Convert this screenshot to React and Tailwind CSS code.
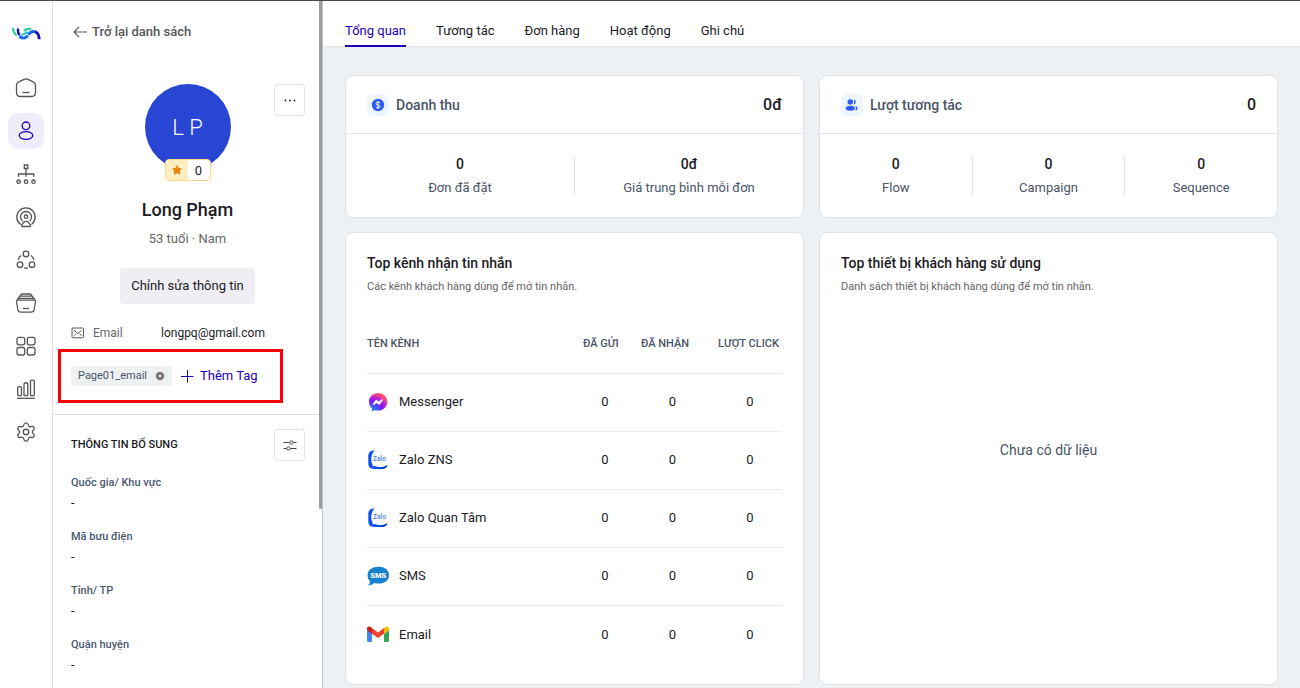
import React from 'react';
import { Settings } from 'lucide-react';

function Logo() {
  return (
    <svg viewBox="0 0 30 16" className="h-4 w-[30px]" fill="none" strokeWidth="2.2">
      <path d="M2 1.800C2 4.800 3 7.400 5.600 9.300" stroke="#2bcf9f" />
      <path d="M6.900 2.500c-.2 2.600.2 4.900 1.700 6.800" stroke="#1d0ab5" strokeWidth="2.400" />
      <path d="M8.300 10.300c2.400 2.600 6 2.700 8.600-.6" stroke="#1767f5" strokeWidth="2.800" />
      <path d="M10.300 8.800c2.200.2 4-1.300 6.200-2.900" stroke="#1cc9c4" />
      <path d="M13 5c2-2 4.300-2.500 7-1.800" stroke="#2bcf9f" strokeWidth="2.400" />
      <path d="M17.300 8.800c1.600-2.700 3.900-4 7.200-3" stroke="#1767f5" strokeWidth="2.800" />
      <path d="M24 5.600c2.500.8 4 3.200 4.200 7.600" stroke="#1d0ab5" strokeWidth="2.800" />
    </svg>
  );
}

const navItems = [
  {
    label: 'Trang chủ',
    icon: (
      <>
        <path d="M16 9.300q2-1 4 0l5.600 2.900q1.900 1 1.900 3v7.300q0 4-4 4h-11q-4 0-4-4v-7.300q0-2 1.900-3z" />
        <path d="M14.500 22.500h7" />
      </>
    ),
  },
  {
    label: 'Khách hàng',
    active: true,
    icon: (
      <>
        <circle cx="18" cy="12.800" r="3.800" />
        <ellipse cx="18" cy="22.500" rx="6.800" ry="3.900" />
      </>
    ),
  },
  {
    label: 'Tổ chức',
    icon: (
      <>
        <path d="M16.300 9h3.500v3.500h-3.500zM18 12.500v8.300M10.500 20.800v-2.800h15.200v2.800" />
        <circle cx="10.600" cy="25.700" r="1.700" />
        <circle cx="18" cy="25.700" r="1.700" />
        <circle cx="25.500" cy="25.700" r="1.700" />
      </>
    ),
  },
  {
    label: 'Chiến dịch',
    icon: (
      <>
        <path d="M12.500 25.400a9.200 9.200 0 1 1 11 0" />
        <path d="M14.200 22a5.500 5.500 0 1 1 7.600 0" />
        <circle cx="18" cy="17.700" r="1.700" />
        <path d="M15.600 23.300q2.400-2 4.800 0l2 2.700q.3 1.500-1 1.500h-6.800q-1.300 0-1-1.500z" />
      </>
    ),
  },
  {
    label: 'Kết nối',
    icon: (
      <>
        <circle cx="18" cy="12" r="2.800" />
        <circle cx="12" cy="22.700" r="2.800" />
        <circle cx="24" cy="22.700" r="2.800" />
        <path d="M13 13.500q-2.300 1.600-2.800 4.300M23 13.500q2.300 1.600 2.800 4.300M16 25.800q2 .5 4 0" />
      </>
    ),
  },
  {
    label: 'Sản phẩm',
    icon: (
      <>
        <path d="M13.500 9h9M11.500 11.200h13M10.500 13.300h15M13.500 9l-4.500 6M22.500 9l4.500 6" />
        <path d="M9.300 15.200h17.400q1 .2.800 1.300l-1.300 8q-.5 2.700-3.200 2.700h-10q-2.700 0-3.200-2.700l-1.300-8q-.2-1.100.8-1.300z" />
        <path d="M15 23.500h6" />
      </>
    ),
  },
  {
    label: 'Ứng dụng',
    icon: (
      <>
        <rect x="9" y="9.300" width="7.700" height="7.500" rx="2" />
        <rect x="19.300" y="9.300" width="7.700" height="7.500" rx="2" />
        <rect x="9" y="19.500" width="7.700" height="7.500" rx="2" />
        <rect x="19.300" y="19.500" width="7.700" height="7.500" rx="2" />
      </>
    ),
  },
  {
    label: 'Báo cáo',
    icon: (
      <>
        <rect x="9.700" y="15.700" width="3.800" height="9" rx="1" />
        <rect x="16" y="12" width="3.800" height="12.700" rx="1" />
        <rect x="22.500" y="9.200" width="3.800" height="15.500" rx="1" />
        <path d="M9 27.300h18" />
      </>
    ),
  },
  { label: 'Cài đặt', icon: <Settings x="7" y="7" width="22" height="22" strokeWidth={1.4} /> },
];

function NavRail() {
  return (
    <nav className="flex w-[53px] shrink-0 flex-col items-center border-r border-[#dfe1e6] bg-white pt-[25px]">
      <a href="#home" aria-label="Logo">
        <Logo />
      </a>
      <ul className="mt-7 flex flex-col gap-[7px]">
        {navItems.map((item) => (
          <li key={item.label}>
            <a
              href="#nav"
              aria-label={item.label}
              className={
                item.active
                  ? 'block size-9 rounded-[10px] bg-[#efedfb] text-[#1d00b4]'
                  : 'block size-9 rounded-[10px] text-[#555]'
              }
            >
              <svg viewBox="0 0 36 36" className="size-9" fill="none" stroke="currentColor" strokeWidth="1.300">
                {item.icon}
              </svg>
            </a>
          </li>
        ))}
      </ul>
    </nav>
  );
}

function Profile() {
  return (
    <section className="relative flex flex-col items-center px-[18px]">
      <button
        type="button"
        aria-label="Thêm thao tác"
        className="absolute right-[17px] top-0 flex h-8 w-[31px] items-center justify-center rounded border border-[#dfe1e6]"
      >
        <svg viewBox="0 0 12 4" className="h-1 w-3 fill-[#222]">
          <circle cx="1.500" cy="2.500" r="0.900" />
          <circle cx="6" cy="2.500" r="0.900" />
          <circle cx="10.500" cy="2.500" r="0.900" />
        </svg>
      </button>
      <div className="flex size-[86px] items-center justify-center rounded-full bg-[#2945d3] text-[22px] font-light text-white">
        L P
      </div>
      <div className="z-10 -mt-[11px] flex h-[22px] w-[46px] overflow-hidden rounded border border-[#fcd884] bg-white text-[13px] leading-[22px]">
        <span className="flex w-[22px] items-center justify-center bg-[#feeec2]">
          <svg viewBox="0 0 12 12" className="size-3 fill-[#e8830c] stroke-[#e8830c]" strokeLinejoin="round">
            <path d="m6 1.700 1.300 2.700 3 .4-2.200 2.100.6 3.200L6 8.700l-2.700 1.400.6-3.200-2.200-2.100 3-.4z" />
          </svg>
        </span>
        <span className="flex-1 text-center">0</span>
      </div>
      <h1 className="mt-[17px] text-lg leading-6 font-medium">Long Phạm</h1>
      <p className="mt-2 text-[13px] leading-[18px] text-[#666]">53 tuổi · Nam</p>
      <button type="button" className="mt-5 h-9 rounded bg-[#eeeef3] px-[11px] text-[13px]">
        Chỉnh sửa thông tin
      </button>
      <dl className="mt-5 flex w-full items-center text-xs leading-[18px]">
        <dt className="flex w-[90px] items-center text-[#666]">
          <svg viewBox="0 0 14 12" className="mr-2 h-3 w-[14px]" fill="none" stroke="#555">
            <rect x="1" y="1" width="11.500" height="9.800" rx="1" />
            <path d="m3 3.500 3.800 3 3.700-3M3 8.700l2-2M10.500 8.700l-2-2" />
          </svg>
          Email
        </dt>
        <dd>longpq@gmail.com</dd>
      </dl>
    </section>
  );
}

function Tags() {
  return (
    <div className="mt-[7px] mr-[39px] ml-[5px] flex h-[54px] items-center border-3 border-[#fb0007] pl-[10px]">
      <span className="flex h-5 items-center rounded-xs bg-[#eef1f2] px-[7px] text-[11px] text-[#4a5568]">
        Page01_email
        <button type="button" aria-label="Xóa tag" className="ml-2">
          <svg viewBox="0 0 10 10" className="size-[10px]">
            <circle cx="5" cy="5" r="4.200" fill="#777" />
            <path d="m3.800 3.800 2.400 2.400M6.200 3.800 3.800 6.200" stroke="#eee" strokeWidth="1.100" />
          </svg>
        </button>
      </span>
      <button type="button" className="ml-2 flex items-center text-[13px] text-[#1d00b4]">
        <svg viewBox="0 0 14 14" className="mr-1.5 size-[14px]" fill="none" stroke="currentColor">
          <path d="M7.500 1v12.500M1 7.500h12.500" />
        </svg>
        Thêm Tag
      </button>
    </div>
  );
}

const extraFields = ['Quốc gia/ Khu vực', 'Mã bưu điện', 'Tỉnh/ TP', 'Quận huyện'];

function CustomerPanel() {
  return (
    <aside className="relative w-[270px] shrink-0 overflow-hidden border-r border-[#bfc3ca] bg-white">
      <a href="#list" className="mt-[21px] mb-[42px] ml-5 flex items-center text-[13px] leading-5 font-medium text-[#555]">
        <svg viewBox="0 0 14 12" className="mr-[5px] h-3 w-[14px]" fill="none" stroke="currentColor" strokeWidth="1.200">
          <path d="M6 1 1 6l5 5M1 6h13" />
        </svg>
        Trở lại danh sách
      </a>
      <Profile />
      <Tags />
      <section className="mt-[11px] border-t border-[#dfe1e6] pl-[18px] pr-[17px] pt-[14px]">
        <div className="flex items-center justify-between">
          <h2 className="text-[11px] font-medium">THÔNG TIN BỔ SUNG</h2>
          <button
            type="button"
            aria-label="Tùy chỉnh"
            className="flex h-8 w-[31px] items-center justify-center rounded border border-[#dfe1e6] text-[#444]"
          >
            <svg viewBox="0 0 14 12" className="h-3 w-[14px]" fill="none" stroke="currentColor">
              <path d="M.5 3.500h6M10.500 3.500h3M.5 9.500h3M7.500 9.500h6" />
              <circle cx="8.500" cy="3.500" r="1.700" />
              <circle cx="5.500" cy="9.500" r="1.700" />
            </svg>
          </button>
        </div>
        <dl className="mt-[14px] text-[11px]">
          {extraFields.map((name) => (
            <div key={name} className="h-[54px]">
              <dt className="leading-4 font-medium text-[#4a5872]">{name}</dt>
              <dd className="mt-[3px] text-[13px] leading-[18px]">-</dd>
            </div>
          ))}
        </dl>
      </section>
      <div className="absolute right-0 top-0 h-[74%] w-[3px] rounded-b-sm bg-[#9c9d9f]" />
    </aside>
  );
}

const tabs = ['Tổng quan', 'Tương tác', 'Đơn hàng', 'Hoạt động', 'Ghi chú'];

function CoinIcon() {
  return (
    <svg viewBox="0 0 22 22" className="size-[22px]">
      <circle cx="11" cy="11" r="6.200" fill="#2f5bf3" />
      <path
        d="M13 9.100q-.4-1-2-1-1.900 0-1.900 1.400t1.900 1.500q2 .1 2 1.500T11 13.900q-1.700 0-2-1M11 7v8"
        fill="none"
        stroke="#fff"
        strokeWidth="0.900"
      />
    </svg>
  );
}

function PeopleIcon() {
  return (
    <svg viewBox="0 0 22 22" className="size-[22px] fill-[#2f5bf3]">
      <circle cx="9.300" cy="8" r="2.800" />
      <ellipse cx="9.300" cy="14.300" rx="4.500" ry="2.500" />
      <path d="M12.800 5.600q2 .3 2 2.400t-2 2.400q1-2.400 0-4.800zM14.500 12.100q2 .5 2 2.300t-2 2q.9-2 0-4.300z" />
    </svg>
  );
}

function StatCard({ icon, title, total, stats }) {
  return (
    <section className="rounded-lg border border-[#e0e2e7] bg-white">
      <header className="flex h-[58px] items-center border-b border-[#e0e2e7] px-[21px]">
        <span className="mr-[7px] rounded-md bg-[#edf5ff]">{icon}</span>
        <h2 className="text-sm font-medium text-[#4a5568]">{title}</h2>
        <span className="ml-auto text-base font-medium">{total}</span>
      </header>
      <dl className="flex py-[22px]">
        {stats.map(([label, value]) => (
          <div key={label} className="flex flex-1 flex-col-reverse border-l border-[#e0e2e7] text-center first:border-l-0">
            <dt className="mt-2 text-[13px] leading-[14px] text-[#4a5568]">{label}</dt>
            <dd className="text-sm leading-[17px] font-medium">{value}</dd>
          </div>
        ))}
      </dl>
    </section>
  );
}

function MessengerIcon() {
  return (
    <svg viewBox="0 0 22 22" className="size-[22px]">
      <defs>
        <radialGradient id="messenger" cx="0.190" cy="0.990" r="1.090">
          <stop offset="0" stopColor="#0099ff" />
          <stop offset="0.550" stopColor="#8a0fff" />
          <stop offset="0.850" stopColor="#f5408a" />
          <stop offset="1" stopColor="#ff6a5c" />
        </radialGradient>
      </defs>
      <path
        d="M11.200 2C5.900 2 2 5.800 2 10.800c0 2.700 1.100 5 2.900 6.500v3.200l2.900-1.500c1 .4 2.200.6 3.400.6 5.300 0 9.100-3.800 9.100-8.800S16.500 2 11.200 2z"
        fill="url(#messenger)"
      />
      <path d="m5.500 13.500 2.800-4.300q.7-.8 1.600-.2l2 1.500 2.700-2q1.300-.5 1.300.4l-2.700 4.300q-.7.8-1.600.2l-2-1.500-2.700 2z" fill="#fff" />
    </svg>
  );
}

function ZaloIcon() {
  return (
    <svg viewBox="0 0 22 22" className="size-[22px]">
      <path
        d="M7.500 1.500C3.200 1.500 1.300 3.500 1.300 7.500v6.300c0 4.400 1.900 6.200 6 6.200h7.200c3.200 0 5.100-1 5.900-3.700-3 1.800-8.400 2.500-12.900.7-.8.300-1.700.4-2.400.3.500-.6.700-1.300.5-1.900C3.500 12 3.700 5.500 7.500 1.500z"
        fill="#0b4ff5"
      />
      <path d="M8 19.900h6.500c3.200 0 5.100-1 5.900-3.600-2.800 2-7 3.200-12.400 3.600z" fill="#0a3bbd" />
      <text x="12.500" y="12.300" textAnchor="middle" fontSize="6.500" fontWeight="500" fill="#3f7dff" fontFamily="Roboto, sans-serif">
        Zalo
      </text>
    </svg>
  );
}

function SmsIcon() {
  return (
    <svg viewBox="0 0 22 22" className="size-[22px]">
      <path d="M11.500 1.800C17.500 1.800 22 4.800 22 10.200s-4.500 8.300-10.500 8.300c-1.500 0-3-.2-4.300-.6-1.500 1.500-3.700 2.400-6.700 2.500 2-1 2.700-2.400 2.400-4.300C1.200 14.700.6 12.700.6 10.200.6 4.800 5.500 1.800 11.500 1.800z" fill="#1681cf" />
      <text x="11.300" y="12.900" textAnchor="middle" fontSize="7.500" fontWeight="900" fill="#fff" fontFamily="Roboto, sans-serif">
        SMS
      </text>
    </svg>
  );
}

function GmailIcon() {
  return (
    <svg viewBox="0 0 22 22" className="size-[22px]">
      <path d="M0 7v10.500q0 1.500 1.500 1.500H5V10.500z" fill="#4285f4" />
      <path d="M22 7v10.500q0 1.500-1.500 1.500H17V10.500z" fill="#34a853" />
      <path d="M5 5v5.700l6 4.400 6-4.400V5l-6 4.500z" fill="#ea4335" />
      <path d="M0 5.500v1.700l5 3.700V5L3.800 4C2 2.800 0 3.500 0 5.500z" fill="#c5221f" />
      <path d="M22 5.500v1.700l-5 3.700V5l1.200-1c1.800-1.200 3.800-.5 3.800 1.500z" fill="#fbbc04" />
    </svg>
  );
}

const channels = [
  ['Messenger', MessengerIcon],
  ['Zalo ZNS', ZaloIcon],
  ['Zalo Quan Tâm', ZaloIcon],
  ['SMS', SmsIcon],
  ['Email', GmailIcon],
];

function CardHeading({ title, text }) {
  return (
    <header>
      <h2 className="text-sm leading-5 font-medium">{title}</h2>
      <p className="mt-[5px] text-[11px] leading-[18px] text-[#666]">{text}</p>
    </header>
  );
}

function ChannelsCard() {
  return (
    <section className="rounded-lg border border-[#e0e2e7] bg-white px-[21px] pt-5 pb-[21px]">
      <CardHeading title="Top kênh nhận tin nhắn" text="Các kênh khách hàng dùng để mở tin nhắn." />
      <table className="mt-[19px] w-full table-fixed border-collapse text-left text-[13px]">
        <colgroup>
          <col />
          <col className="w-[58px]" />
          <col className="w-[77px]" />
          <col className="w-[64px]" />
        </colgroup>
        <thead>
          <tr className="h-[58px] text-[11px] whitespace-nowrap text-[#4a5568]">
            <th className="font-medium">TÊN KÊNH</th>
            <th className="font-medium">ĐÃ GỬI</th>
            <th className="font-medium">ĐÃ NHẬN</th>
            <th className="font-medium">LƯỢT CLICK</th>
          </tr>
        </thead>
        <tbody>
          {channels.map(([name, Icon]) => (
            <tr key={name} className="h-[58px] border-t border-[#eaebee]">
              <td>
                <span className="flex items-center gap-[10px]">
                  <Icon />
                  {name}
                </span>
              </td>
              <td className="pr-[14px] text-center">0</td>
              <td className="pr-[14px] text-center">0</td>
              <td className="text-center">0</td>
            </tr>
          ))}
        </tbody>
      </table>
    </section>
  );
}

function DevicesCard() {
  return (
    <section className="flex flex-col rounded-lg border border-[#e0e2e7] bg-white px-[21px] pt-5">
      <CardHeading title="Top thiết bị khách hàng sử dụng" text="Danh sách thiết bị khách hàng dùng để mở tin nhắn." />
      <p className="pt-36 text-center text-sm leading-5 text-[#4a5568]">Chưa có dữ liệu</p>
    </section>
  );
}

export default function App() {
  return (
    <div className="flex h-screen overflow-hidden border-t border-[#4b4a50] bg-[#edf1f3] font-['Roboto',sans-serif] text-[#1b1b1f]">
      <NavRail />
      <CustomerPanel />
      <main className="min-w-0 flex-1 overflow-hidden">
        <nav className="flex h-[46px] items-end gap-[30px] border-b border-[#e2e4e8] bg-white px-[22px]">
          {tabs.map((tab, i) => (
            <a
              key={tab}
              href="#tab"
              className={
                i === 0
                  ? '-mb-px border-b-2 border-[#1d00b4] pb-1 text-[13px] leading-5 text-[#1d00b4]'
                  : '-mb-px border-b-2 border-transparent pb-1 text-[13px] leading-5'
              }
            >
              {tab}
            </a>
          ))}
        </nav>
        <div className="grid grid-cols-2 gap-x-[15px] gap-y-[14px] px-[22px] pt-7 pb-4">
          <StatCard
            icon={<CoinIcon />}
            title="Doanh thu"
            total="0đ"
            stats={[
              ['Đơn đã đặt', '0'],
              ['Giá trung bình mỗi đơn', '0đ'],
            ]}
          />
          <StatCard
            icon={<PeopleIcon />}
            title="Lượt tương tác"
            total="0"
            stats={[
              ['Flow', '0'],
              ['Campaign', '0'],
              ['Sequence', '0'],
            ]}
          />
          <ChannelsCard />
          <DevicesCard />
        </div>
      </main>
    </div>
  );
}
